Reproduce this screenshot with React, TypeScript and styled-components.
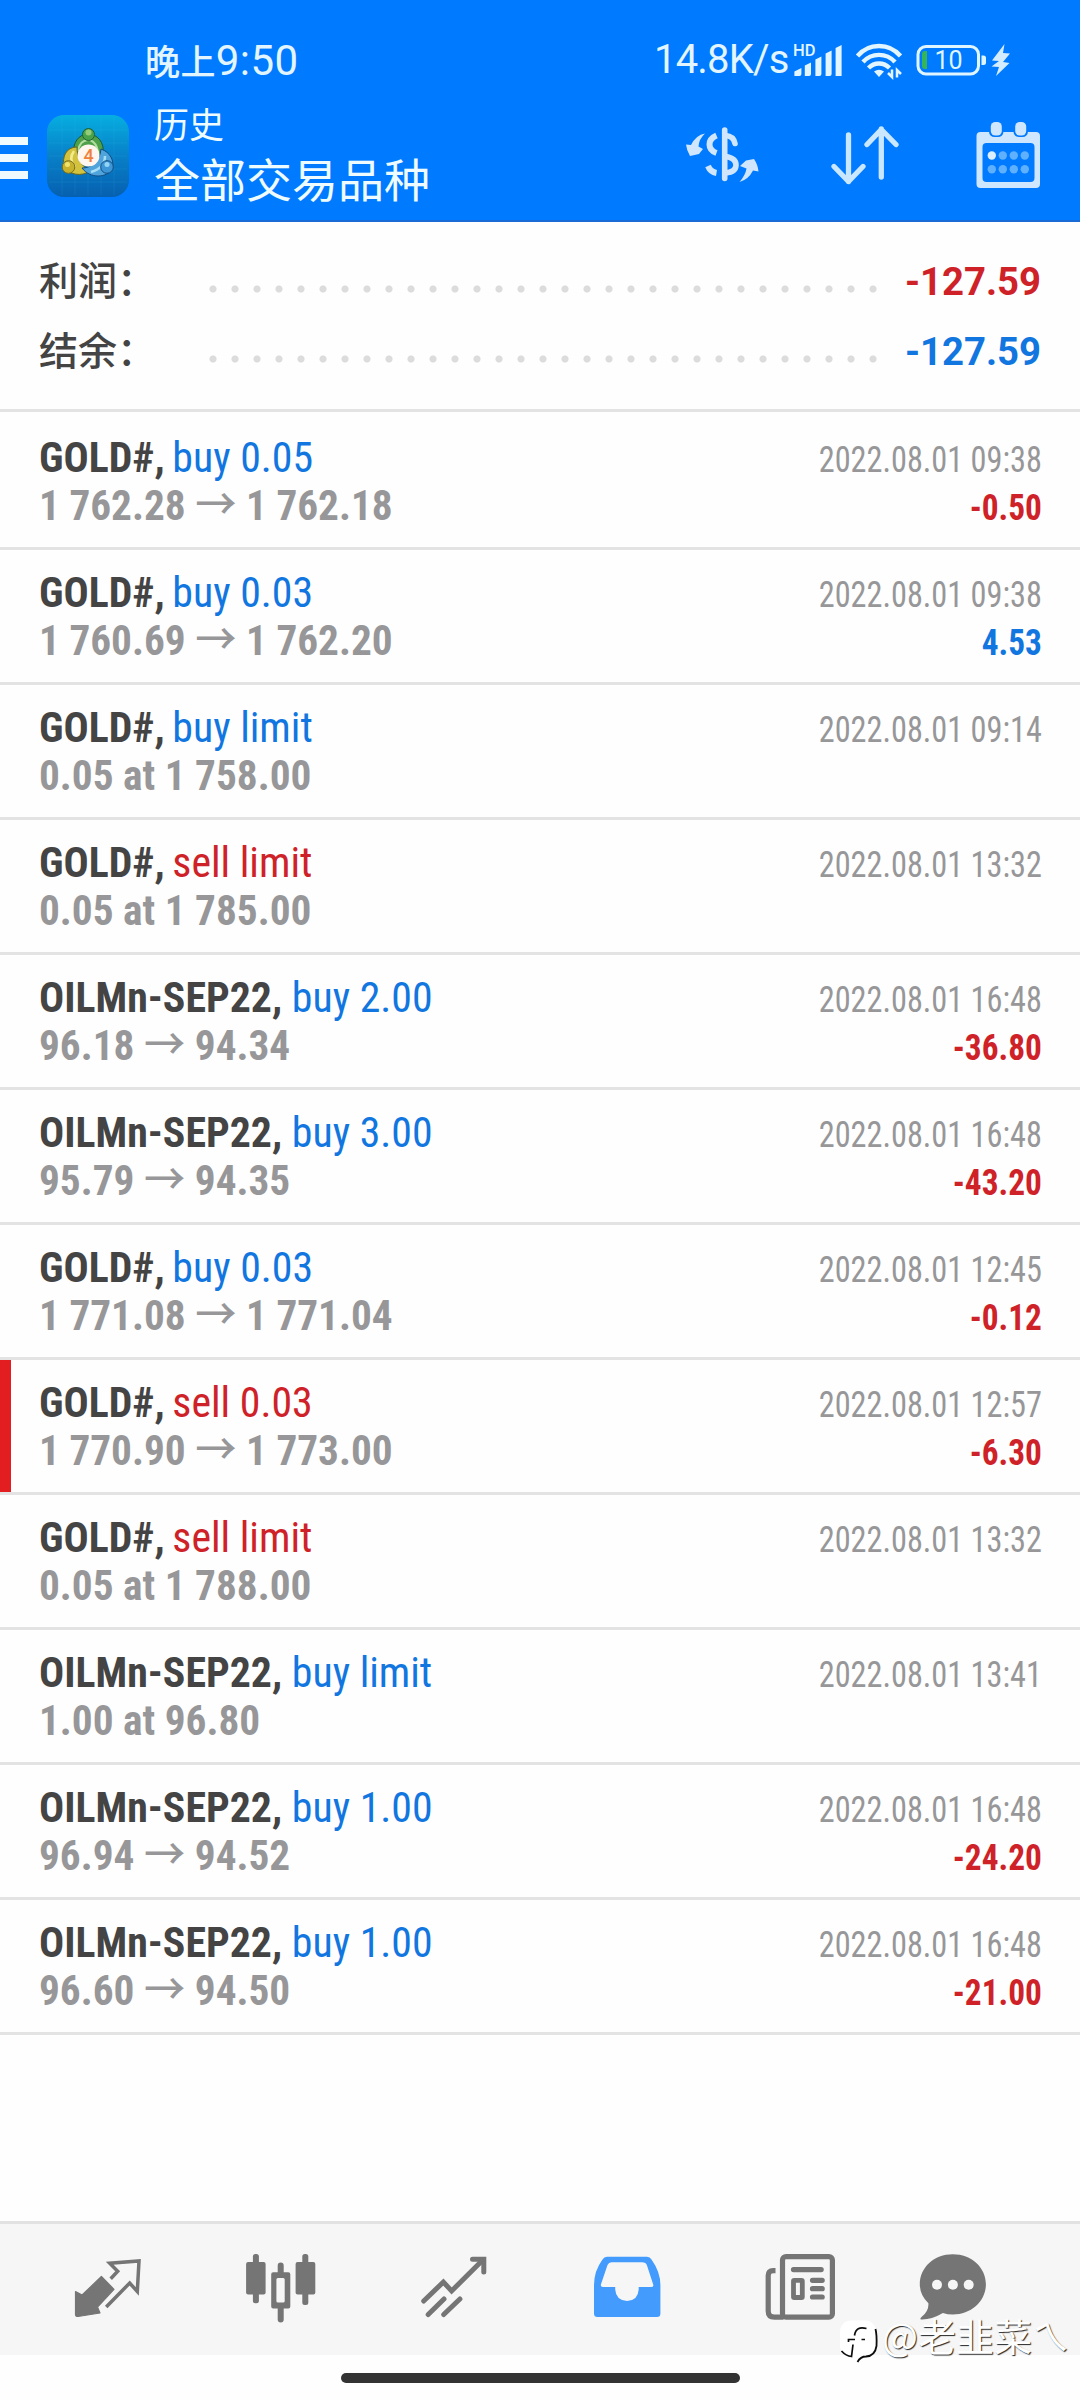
import React from "react";
import styled, { createGlobalStyle } from "styled-components";

const BLUE = "#1276e0";
const RED = "#cf2228";
const cjk = '"Noto Sans CJK SC", sans-serif';

const GlobalStyle = createGlobalStyle`
  * { box-sizing: border-box; }
  body { margin: 0; background: #fefefe; font-family: Roboto, ${cjk}; }
  svg { display: block; flex: none; }
`;

const Screen = styled.div`
  position: relative;
  display: flex;
  flex-direction: column;
  width: 1080px;
  height: 2400px;
  overflow: hidden;
  background: #fefefe;
`;

const Header = styled.header`
  flex: none;
  height: 222px;
  background: #007aff;
  border-bottom: 2px solid #1a6bd6;
`;

const StatusBar = styled.div`
  display: flex;
  align-items: flex-start;
  height: 100px;
  padding: 36px 0 0 145px;
  color: #e3f6ff;
`;

const Clock = styled.div`
  flex: 1;
  display: flex;
  align-items: baseline;
  font: 400 42px/48px Roboto, ${cjk};
  letter-spacing: 0.4px;
`;

const DayPart = styled.span`
  font: 500 35px/48px ${cjk};
`;

const Speed = styled.div`
  font: 400 40px/48px Roboto, ${cjk};
  letter-spacing: -0.8px;
  width: 138px;
`;

const StatusIcons = styled.div`
  display: flex;
  gap: 10px;
  width: 288px;
  padding-top: 4px;
`;

const TitleBar = styled.div`
  display: flex;
  align-items: flex-start;
  height: 120px;
`;

const MenuButton = styled.div`
  display: flex;
  flex-direction: column;
  gap: 9px;
  width: 28px;
  margin: 37px 19px 0 0;
`;

const MenuLine = styled.div`
  height: 8px;
  background: #effaff;
`;

const LogoSlot = styled.div`
  padding-top: 15px;
`;

const Titles = styled.div`
  flex: 1;
  padding-left: 25px;
  color: #effcff;
  font-family: ${cjk};
`;

const Caption = styled.div`
  font-size: 35px;
  line-height: 46px;
`;

const Title = styled.div`
  font-size: 46px;
  line-height: 62px;
`;

const Actions = styled.div`
  display: flex;
  gap: 55px;
  padding: 10px 32px 0 0;

  svg:last-child {
    margin-left: 10px;
  }
`;

const Summary = styled.section`
  flex: none;
  height: 190px;
  padding: 24px 39px 0 39px;
  border-bottom: 3px solid #e3e3e4;
`;

const SummaryLine = styled.div`
  display: flex;
  height: 70px;
`;

const SummaryLabel = styled.div`
  width: 163px;
  color: #444;
  font: 500 39px/64px ${cjk};
`;

const Dots = styled.div`
  width: 682px;
  height: 22px;
  margin-top: 32px;
  background: radial-gradient(circle at 50% 50%, #dcdcdc 3.1px, transparent 4px) 0 0 / 22px 22px repeat-x;
`;

const SummaryValue = styled.div<{ $color: string }>`
  flex: 1;
  text-align: right;
  color: ${(p) => p.$color};
  font: 700 38.3px/71px Roboto, ${cjk};
`;

const List = styled.main`
  flex: 1;
  padding-top: 3px;
`;

const Row = styled.article<{ $stopped?: boolean }>`
  display: flex;
  justify-content: space-between;
  height: 135px;
  padding: 18px 38px 0 39px;
  border-bottom: 3px solid #e3e3e4;
  ${(p) => p.$stopped && "background: linear-gradient(#e31e20, #e31e20) 0 0 / 11px 132px no-repeat;"}
`;

const Cell = styled.div<{ $end?: boolean }>`
  padding-top: ${(p) => (p.$end ? 3 : 0)}px;
  font: 700 43px/48px "Roboto Condensed", Roboto, ${cjk};
  text-align: ${(p) => (p.$end ? "right" : "left")};
  white-space: nowrap;
`;

const DealName = styled.div`
  color: #444;
  transform: scaleX(0.972);
  transform-origin: left;
`;

const Action = styled.span<{ $sell: boolean; $pull: number }>`
  margin-left: -${(p) => p.$pull}px;
  font-weight: 400;
  color: ${(p) => (p.$sell ? RED : BLUE)};
`;

const Price = styled.div`
  color: #979799;
  transform: scaleX(0.96);
  transform-origin: left;
`;

const Arrow = styled.span`
  font: 500 43px/0 ${cjk};
`;

const Time = styled.div`
  color: #979799;
  font-size: 37px;
  font-weight: 400;
  transform: scaleX(0.872);
  transform-origin: right;
`;

const Profit = styled.div<{ $loss: boolean }>`
  color: ${(p) => (p.$loss ? RED : BLUE)};
  font-size: 36px;
  transform: scaleX(0.925);
  transform-origin: right;
`;

const TabBar = styled.nav`
  flex: none;
  display: flex;
  align-items: flex-start;
  height: 134px;
  padding: 26px 0 0 21px;
  background: #f6f6f6;
  border-top: 3px solid #e2e2e2;
`;

const Tab = styled.div<{ $width?: number }>`
  display: flex;
  justify-content: center;
  width: ${(p) => p.$width ?? 173}px;
`;

const GestureArea = styled.footer`
  flex: none;
  display: flex;
  justify-content: center;
  height: 45px;
  padding-top: 18px;
`;

const GestureBar = styled.div`
  width: 399px;
  height: 10px;
  border-radius: 5px;
  background: #333;
`;

const Watermark = styled.div`
  position: absolute;
  left: 839px;
  top: 2318px;
  display: flex;
  align-items: flex-start;
  gap: 4px;
  color: #fff;
  font: 400 38px/34px ${cjk};
  white-space: nowrap;
  text-shadow: 1px 1px 1px rgba(0, 0, 0, 0.85);
`;

type Deal = {
  symbol: string;
  action: string;
  from?: string;
  to?: string;
  order?: string;
  time: string;
  profit?: string;
  stopped?: boolean;
};

const deals: Deal[] = [
  { symbol: "GOLD#", action: "buy 0.05", from: "1 762.28", to: "1 762.18", time: "2022.08.01 09:38", profit: "-0.50" },
  { symbol: "GOLD#", action: "buy 0.03", from: "1 760.69", to: "1 762.20", time: "2022.08.01 09:38", profit: "4.53" },
  { symbol: "GOLD#", action: "buy limit", order: "0.05 at 1 758.00", time: "2022.08.01 09:14" },
  { symbol: "GOLD#", action: "sell limit", order: "0.05 at 1 785.00", time: "2022.08.01 13:32" },
  { symbol: "OILMn-SEP22", action: "buy 2.00", from: "96.18", to: "94.34", time: "2022.08.01 16:48", profit: "-36.80" },
  { symbol: "OILMn-SEP22", action: "buy 3.00", from: "95.79", to: "94.35", time: "2022.08.01 16:48", profit: "-43.20" },
  { symbol: "GOLD#", action: "buy 0.03", from: "1 771.08", to: "1 771.04", time: "2022.08.01 12:45", profit: "-0.12" },
  { symbol: "GOLD#", action: "sell 0.03", from: "1 770.90", to: "1 773.00", time: "2022.08.01 12:57", profit: "-6.30", stopped: true },
  { symbol: "GOLD#", action: "sell limit", order: "0.05 at 1 788.00", time: "2022.08.01 13:32" },
  { symbol: "OILMn-SEP22", action: "buy limit", order: "1.00 at 96.80", time: "2022.08.01 13:41" },
  { symbol: "OILMn-SEP22", action: "buy 1.00", from: "96.94", to: "94.52", time: "2022.08.01 16:48", profit: "-24.20" },
  { symbol: "OILMn-SEP22", action: "buy 1.00", from: "96.60", to: "94.50", time: "2022.08.01 16:48", profit: "-21.00" },
];

function SignalIcon() {
  return (
    <svg width="52" height="40" viewBox="0 0 52 40" fill="#e3f6ff">
      <text x="1" y="15.5" fontFamily="Roboto, sans-serif" fontWeight="500" fontSize="16.5">HD</text>
      <path d="M2.400 36V31.500L9.400 28V34a2 2 0 0 1-2 2zM12.800 36V25.500L19 22.500V34a2 2 0 0 1-2 2zM23.400 36V19.500L29.400 16.500V34a2 2 0 0 1-2 2zM33.600 36V13.500L39.600 10.500V34a2 2 0 0 1-2 2zM43.600 36V8L49.600 5V36z" />
    </svg>
  );
}

function WifiIcon() {
  return (
    <svg width="50" height="40" viewBox="0 0 50 40" fill="none" stroke="#e3f6ff" strokeWidth="4.400">
      <path d="M3.500 16A28 28 0 0 1 46.500 16M9 22A21.500 21.500 0 0 1 41 22M14.500 28A14.500 14.500 0 0 1 35.500 28" />
      <path d="M20 31.500Q25 28 30 31.500L25 37z" fill="#e3f6ff" stroke="none" />
      <path d="M38 29.500V37L34 33M43 37.500V30L47 34" strokeWidth="2.500" />
    </svg>
  );
}

function BatteryIcon() {
  return (
    <svg width="96" height="40" viewBox="-1.500 0 96 40" fill="none">
      <rect x="2.500" y="6.500" width="60.500" height="27.500" rx="8" stroke="#dff5ff" strokeWidth="3" />
      <path d="M11.500 11v18h-2a3 3 0 0 1-3-3v-12a3 3 0 0 1 3-3z" fill="#35b558" />
      <text x="19" y="29" fill="#dff5ff" fontFamily="Roboto, sans-serif" fontSize="25">10</text>
      <path d="M66 15.500h2a2.500 2.500 0 0 1 2.500 2.500v4.500a2.500 2.500 0 0 1-2.500 2.500h-2z" fill="#dff5ff" />
      <path d="M89 4L76.500 20.500L83.500 21L76 26.500L83.500 27L80.500 36L94 23L87.500 22L94.500 13.500L87.500 13z" fill="#d3ecff" />
    </svg>
  );
}

function AppLogo() {
  return (
    <svg width="82" height="82" viewBox="0 0 82 82">
      <defs>
        <linearGradient id="sky" x1="0" y1="0" x2="0" y2="1">
          <stop offset="0" stopColor="#06aee0" />
          <stop offset=".5" stopColor="#0880c8" />
          <stop offset="1" stopColor="#0660b0" />
        </linearGradient>
      </defs>
      <rect width="82" height="82" rx="17" fill="url(#sky)" />
      <path d="M15 2V80M28 2V80M41 2V80M54 2V80M67 2V80M2 15H80M2 28H80M2 41H80M2 54H80M2 67H80" stroke="#3cc2ec" strokeOpacity=".13" />
      <g fill="none" strokeWidth="1">
        <path d="M27 39C25 28 32 19 41 19S58 27 56 40C53 45 48 46 42 45S31 43 27 39z" fill="#4fa04a" stroke="#195a35" />
        <path d="M31 36Q33 24 43 25Q50 28 51 37" stroke="#b3dea0" strokeWidth="2" />
        <path d="M30 32C19 32 15 42 17 51C21 60 35 62 43 56C34 51 30 43 30 32z" fill="#d3c23d" stroke="#66651d" />
        <path d="M27 36Q21 44 28 52" stroke="#f3eb91" strokeWidth="2.500" />
        <path d="M54 34C63 37 68 46 65 54C60 63 43 64 35 53C45 53 53 46 54 34z" fill="#4fa4dc" stroke="#104c83" />
        <path d="M58 41Q58 53 44 57" stroke="#a6ddf6" strokeWidth="2.500" />
        <circle cx="41.500" cy="19.500" r="6" fill="#4aa34b" stroke="#215f36" />
        <circle cx="21.500" cy="52" r="6.300" fill="#c8b22d" stroke="#77701f" />
        <circle cx="60" cy="52" r="6.300" fill="#3d97d6" stroke="#104c83" />
      </g>
      <circle cx="41.500" cy="17.500" r="3" fill="#94cc79" />
      <circle cx="20.500" cy="49.500" r="2.500" fill="#f0e36e" />
      <circle cx="60" cy="49.500" r="2.500" fill="#94d4f5" />
      <circle cx="41.500" cy="40.500" r="11" fill="#fff6f0" />
      <text x="36.500" y="47" fontFamily="Roboto, sans-serif" fontSize="18" fontWeight="500" fill="#ef813b">4</text>
    </svg>
  );
}

function CurrencyIcon() {
  return (
    <svg width="90" height="80" viewBox="0 0 90 80" fill="none" stroke="#cfe6fc" strokeWidth="5.400" strokeLinecap="round">
      <path d="M44.700 20V68.500" strokeWidth="5.600" />
      <path d="M36.500 25.500Q29.500 28.500 29.500 34.500T36.500 43M28 56Q30.500 62 36.500 63" strokeLinecap="butt" strokeWidth="6" />
      <path d="M45.500 25.500Q53.500 26 55 33.500M45.500 46.500Q56 48 56 55T45.500 63" strokeWidth="5.600" />
      <path d="M6 34.500L11 35Q16 25 25 23.500Q19 29 18.500 36.500L23 39L19 44L10 46Q6.500 40 6 34.500zM59.500 72Q65.500 65 66.500 58.500L60 56L66 50.500L74 49Q78 55 78.500 61.500L73 60.500Q68.500 69.500 59.500 72z" fill="#cfe6fc" stroke="none" />
    </svg>
  );
}

function SortIcon() {
  return (
    <svg width="80" height="80" viewBox="0 0 80 80" fill="none" stroke="#c9e7ff" strokeWidth="5.300" strokeLinecap="round" strokeLinejoin="round">
      <path d="M23.500 25V71.500M9 56.500L23.500 71.500L38 56.500M56.300 67V19M42 34.500L56.300 19.500L71 34.500" />
    </svg>
  );
}

function CalendarIcon() {
  return (
    <svg width="78" height="80" viewBox="0 0 78 80" fill="#cfe6ff">
      <path fillRule="evenodd" d="M10.500 22H66a4 4 0 0 1 4 4V74a4 4 0 0 1-4 4H10.500a4 4 0 0 1-4-4V26a4 4 0 0 1 4-4zM16.500 33a4 4 0 0 0-4 4V68a4 4 0 0 0 4 4H60.500a4 4 0 0 0 4-4V37a4 4 0 0 0-4-4z" />
      <rect x="19" y="10" width="14.500" height="17" rx="5.500" fill="#007aff" />
      <rect x="43.500" y="10" width="14.500" height="17" rx="5.500" fill="#007aff" />
      <rect x="20.800" y="12" width="11" height="13.500" rx="4.500" />
      <rect x="45.200" y="12" width="11" height="13.500" rx="4.500" />
      <circle cx="21.800" cy="45.500" r="4.200" fill="#dcf0ff" />
      <g fill="#5fb0ff">
        <circle cx="32.800" cy="45.500" r="4.200" />
        <circle cx="43.800" cy="45.500" r="4.200" />
        <circle cx="54.800" cy="45.500" r="4.200" />
        <circle cx="21.800" cy="59.300" r="4.200" />
        <circle cx="32.800" cy="59.300" r="4.200" />
        <circle cx="43.800" cy="59.300" r="4.200" />
        <circle cx="54.800" cy="59.300" r="4.200" />
      </g>
    </svg>
  );
}

function QuotesIcon() {
  return (
    <svg width="80" height="80" viewBox="-1.500 0 80 80">
      <path d="M6 41.500L12.600 45L31.900 26.500L44.500 39.300L28 57L30.500 63L8.500 66.500Q6 66.500 6 64.500z" fill="#757575" stroke="#757575" strokeWidth="1.200" strokeLinejoin="round" />
      <path d="M41.200 28.700L48.200 21.300L40.200 13.200L69.500 11L67.800 41.500L60.200 33L36.700 57" fill="none" stroke="#757575" strokeWidth="3.500" />
    </svg>
  );
}

function ChartIcon() {
  return (
    <svg width="80" height="80" viewBox="1.500 0 80 80" fill="#757575">
      <rect x="6.600" y="12" width="19.500" height="32.500" rx="2" />
      <rect x="13.400" y="4" width="6" height="49.300" rx="2.500" />
      <path fillRule="evenodd" d="M33.700 22.300H48.800a2 2 0 0 1 2 2V56.500a2 2 0 0 1-2 2H33.700a2 2 0 0 1-2-2V24.300a2 2 0 0 1 2-2zM38.400 28a1.500 1.500 0 0 0-1.500 1.500V51a1.500 1.500 0 0 0 1.500 1.500H43.700a1.500 1.500 0 0 0 1.500-1.500V29.500a1.500 1.500 0 0 0-1.500-1.500z" />
      <path d="M38.200 24V15.500a3 3 0 0 1 6 0V24zM38.200 57V69.500a3 3 0 0 0 6 0V57z" />
      <rect x="56.100" y="12" width="19.700" height="32.500" rx="2" />
      <rect x="62.800" y="4" width="6" height="51" rx="2.500" />
    </svg>
  );
}

function TrendIcon() {
  return (
    <svg width="80" height="80" viewBox="-.5 0 80 80" fill="none" stroke="#757575" strokeWidth="5" strokeLinecap="round">
      <path d="M9.200 51L28.900 32L37.100 41L68.500 9.800" />
      <path d="M58 9.300H69.300V22M13.700 64.500L29.500 49M29.200 64.500L45.400 49" />
    </svg>
  );
}

function HistoryIcon() {
  return (
    <svg width="80" height="80" viewBox="-2.500 0 80 80" fill="#429bfd">
      <path fillRule="evenodd" d="M17.500 6.700H57.500Q60.500 6.700 62 9.500Q70.900 22 70.900 35V63.500a3.500 3.500 0 0 1-3.500 3.500H8a3.500 3.500 0 0 1-3.500-3.500V35Q4.500 21 13 9.500Q14.500 6.700 17.500 6.700zM22 12.300Q19.200 12.300 18 15L11.400 34.500Q10.800 37 13.500 37H25.700V39.500Q26.500 50.500 37.600 51Q48.500 50.500 49.200 39.500V37H61.500Q64.500 37 63.700 34.500L57.500 15.500Q56.500 12.300 52.500 12.300z" />
    </svg>
  );
}

function NewsIcon() {
  return (
    <svg width="80" height="80" viewBox=".5 0 80 80" fill="none" stroke="#757575" strokeWidth="5.200">
      <rect x="23" y="6.600" width="49.900" height="60.600" rx="3.500" />
      <path d="M16 20.600H13.500Q8.700 20.600 8.700 25.500V61Q8.700 67.200 15 67.200H24" />
      <path d="M34 19.600H61.700M53 30.300H62.700M53 38.700H62.700M53 47H62.700" strokeLinecap="round" />
      <rect x="34" y="30.300" width="8.800" height="17.200" rx=".8" strokeWidth="4.800" />
    </svg>
  );
}

function ChatIcon() {
  return (
    <svg width="80" height="80" viewBox="0 0 80 80">
      <path d="M37.800 4.200C56.500 4.200 70.900 17.500 70.900 34.200S56.500 64.500 37.800 64.500Q32.500 64.500 27.900 63Q16 70 6 69.500Q4.500 69 6.500 67Q14 61 13.400 53.300Q4.800 45 4.800 34.200C4.800 17.500 19 4.200 37.800 4.200z" fill="#757575" />
      <circle cx="22" cy="34.700" r="5" fill="#f6f6f6" />
      <circle cx="37.900" cy="34.700" r="5" fill="#f6f6f6" />
      <circle cx="53.700" cy="34.700" r="5" fill="#f6f6f6" />
    </svg>
  );
}

function CommunityLogo() {
  return (
    <svg width="39" height="46" viewBox="0 0 39 46" fill="none">
      <rect x="1" y="2.500" width="36" height="36" rx="11" fill="#fff" />
      <path d="M27.500 10.500Q17 7.500 15.500 17.500M9.500 24V21.500H16M14 26.500L12.500 38.500Q7 38 2.500 33M22.500 21.500H26" stroke="#0d0d0d" strokeWidth="1.700" />
      <path d="M36.500 11Q38 17 37.500 28Q36 38 27 38.500Q21.500 38.500 18.500 44" stroke="#0d0d0d" strokeWidth="1.800" />
    </svg>
  );
}

export default function App() {
  return (
    <Screen>
      <GlobalStyle />
      <Header>
        <StatusBar>
          <Clock><DayPart>晚上</DayPart>9:50</Clock>
          <Speed>14.8K/s</Speed>
          <StatusIcons>
            <SignalIcon />
            <WifiIcon />
            <BatteryIcon />
          </StatusIcons>
        </StatusBar>
        <TitleBar>
          <MenuButton><MenuLine /><MenuLine /><MenuLine /></MenuButton>
          <LogoSlot><AppLogo /></LogoSlot>
          <Titles>
            <Caption>历史</Caption>
            <Title>全部交易品种</Title>
          </Titles>
          <Actions><CurrencyIcon /><SortIcon /><CalendarIcon /></Actions>
        </TitleBar>
      </Header>
      <Summary>
        <SummaryLine>
          <SummaryLabel>利润：</SummaryLabel><Dots /><SummaryValue $color={RED}>-127.59</SummaryValue>
        </SummaryLine>
        <SummaryLine>
          <SummaryLabel>结余：</SummaryLabel><Dots /><SummaryValue $color={BLUE}>-127.59</SummaryValue>
        </SummaryLine>
      </Summary>
      <List>
        {deals.map((d, i) => (
          <Row key={i} $stopped={d.stopped}>
            <Cell>
              <DealName>
                {d.symbol},{" "}
                <Action $sell={d.action.startsWith("sell")} $pull={d.symbol.endsWith("#") ? 2 : 0}>{d.action}</Action>
              </DealName>
              <Price>{d.order ?? <>{d.from} <Arrow>→</Arrow> {d.to}</>}</Price>
            </Cell>
            <Cell $end>
              <Time>{d.time}</Time>
              {d.profit && <Profit $loss={d.profit.startsWith("-")}>{d.profit}</Profit>}
            </Cell>
          </Row>
        ))}
      </List>
      <TabBar>
        <Tab><QuotesIcon /></Tab>
        <Tab><ChartIcon /></Tab>
        <Tab><TrendIcon /></Tab>
        <Tab><HistoryIcon /></Tab>
        <Tab><NewsIcon /></Tab>
        <Tab $width={138}><ChatIcon /></Tab>
      </TabBar>
      <GestureArea><GestureBar /></GestureArea>
      <Watermark><CommunityLogo />@老韭菜ㄟ</Watermark>
    </Screen>
  );
}
